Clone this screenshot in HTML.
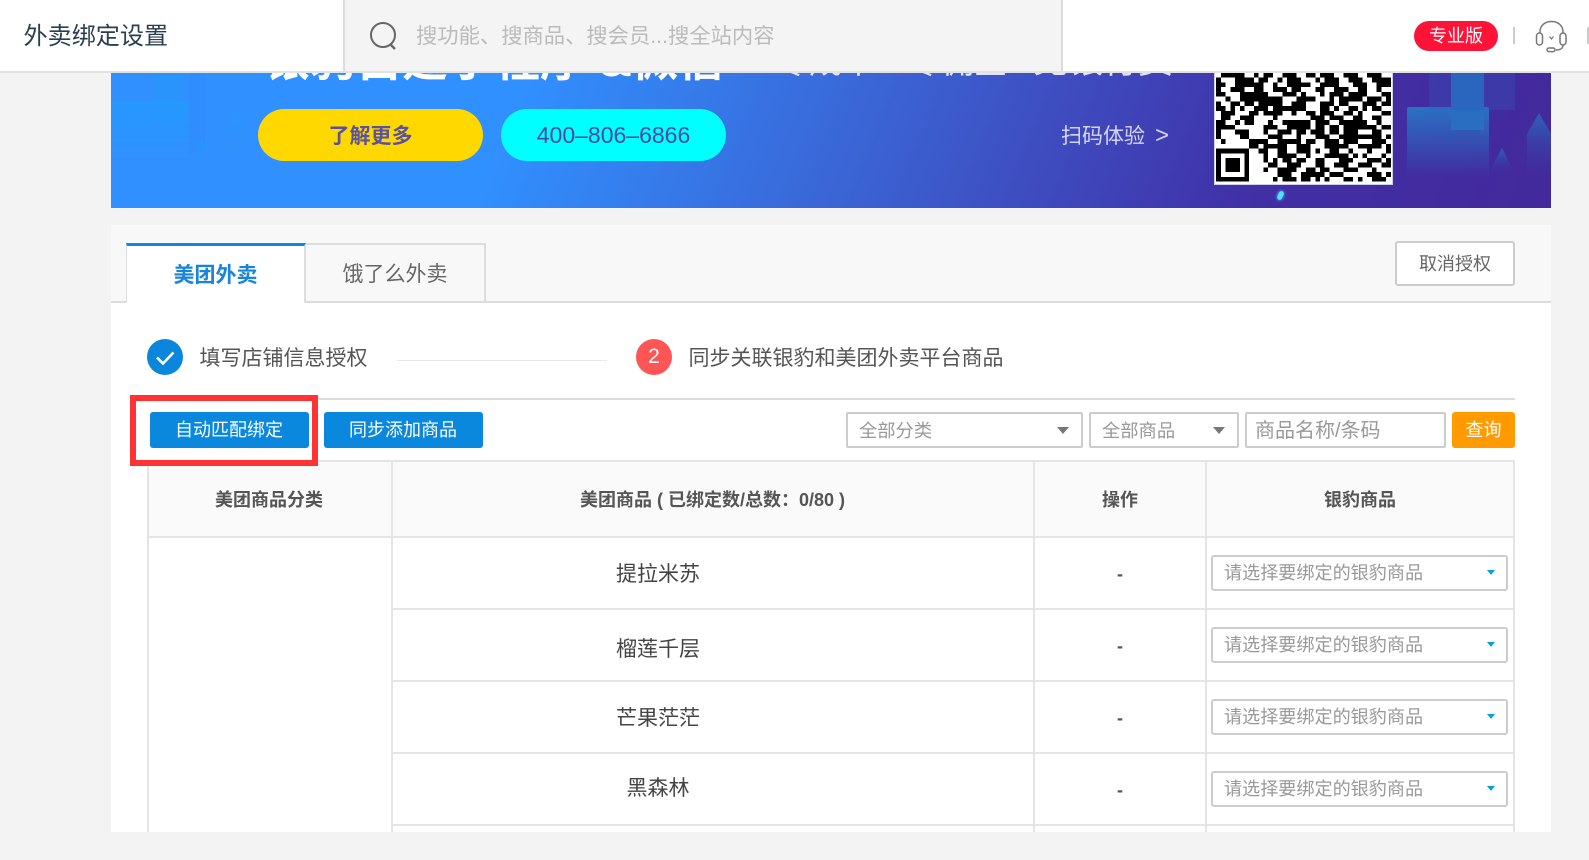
<!DOCTYPE html>
<html lang="zh-CN"><head><meta charset="utf-8"><title>外卖绑定设置</title>
<style>
*{box-sizing:border-box}
html,body{margin:0;padding:0;width:1589px;height:860px;overflow:hidden;background:#f3f3f3;font-family:"Liberation Sans","Noto Sans CJK SC",sans-serif;color:#555}
.a{position:absolute}
.t{position:absolute;white-space:nowrap;line-height:30px;height:30px}
.c{text-align:center}
.hl{position:absolute;background:#e5e5e5;height:2px}
.vl{position:absolute;background:#e5e5e5;width:2px}
.sel{position:absolute;left:1211px;width:297px;height:36px;background:#fff;border:2px solid #ccc;border-radius:3px}
.sel span{position:absolute;left:11px;top:2px;line-height:28px;font-size:18.1px;color:#999;white-space:nowrap}
.sel i{position:absolute;left:274px;top:13px;width:0;height:0;border-left:4.5px solid transparent;border-right:4.5px solid transparent;border-top:5px solid #0a9fdc}
.box{position:absolute;top:412px;height:36px;background:#fff;border:2px solid #ccc;border-radius:2px}
.tri{position:absolute;top:427px;width:0;height:0;border-left:6px solid transparent;border-right:6px solid transparent;border-top:7px solid #777}
.btn{position:absolute;top:412px;height:36px;background:#0a88dd;color:#fff;border-radius:3px;font-size:18px;line-height:36px;text-align:center}
.name{font-size:21px;color:#444;left:392px;width:532px;text-align:center}
.dash{font-size:18px;font-weight:700;left:1035px;width:170px;text-align:center;color:#555}
</style></head><body>

<!-- banner -->
<div class="a" style="left:111px;top:60px;width:1440px;height:148px;overflow:hidden;background:linear-gradient(112deg,#3190ff 0%,#3190ff 28%,#3c5fd0 55%,#412fa6 80%,#43299b 100%)">
  <div class="a" style="left:42px;top:0;width:30px;height:60px;background:#2597fb;opacity:.55"></div>
  <div class="a" style="left:0;top:42px;width:78px;height:60px;background:linear-gradient(rgba(36,153,253,.85),rgba(36,153,253,0))"></div>
  <div class="a" style="left:78px;top:13px;width:16px;height:80px;background:rgba(40,125,240,.15)"></div>
  <svg class="a" style="left:70px;top:40px" width="70" height="80"><defs><linearGradient id="g1" x1="0" y1="0" x2="0" y2="1"><stop offset="0" stop-color="#2499fd"/><stop offset="1" stop-color="#2f8ffc" stop-opacity="0"/></linearGradient></defs><path d="M21 40L34 62H8z" fill="url(#g1)"/><path d="M54 8L66 30V62H44V30z" fill="url(#g1)" opacity=".7"/></svg>
  <div class="a" style="left:1296px;top:47px;width:82px;height:70px;border-radius:2px;background:linear-gradient(#2a72c4,rgba(42,100,190,0))"></div>
  <div class="a" style="left:1340px;top:0;width:33px;height:70px;background:linear-gradient(#2668bf,#2a6fc0)"></div>
  <div class="a" style="left:1318px;top:0;width:86px;height:50px;background:rgba(50,90,190,.3)"></div>
  <svg class="a" style="left:1370px;top:50px" width="70" height="90"><defs><linearGradient id="g2" x1="0" y1="0" x2="0" y2="1"><stop offset="0" stop-color="#2c63b8"/><stop offset="1" stop-color="#3d35a2" stop-opacity="0"/></linearGradient></defs><path d="M21 38L34 64H7z" fill="url(#g2)"/><path d="M58 3L70 24V70H46V24z" fill="url(#g2)"/></svg>
  <div class="t" style="left:153px;top:-30px;font-size:46px;line-height:60px;height:60px;font-weight:700;color:#fff">银豹自建小程序 &amp;微信</div>
  <div class="t" style="left:665px;top:-23px;font-size:33px;line-height:50px;height:50px;color:#dfe6ff">零成本</div>
  <div class="t" style="left:797px;top:-23px;font-size:33px;line-height:50px;height:50px;color:#dfe6ff">零佣金</div>
  <div class="t" style="left:922px;top:-23px;font-size:35px;line-height:50px;height:50px;color:#dfe6ff">免银行费</div>
  <div class="a" style="left:147px;top:49px;width:225px;height:52px;border-radius:26px;background:#ffd800"></div>
  <div class="a" style="left:390px;top:49px;width:225px;height:52px;border-radius:26px;background:#00ffff"></div>
  <div class="t c" style="left:147px;width:225px;top:62px;font-size:21px;font-weight:700;color:#5a52a0">了解更多</div>
  <div class="t c" style="left:390px;width:225px;top:60px;font-size:23px;color:#4a4aa5">400–806–6866</div>
  <div class="t" style="left:950px;top:62px;font-size:21px;color:rgba(255,255,255,.78)">扫码体验</div>
  <div class="t" style="left:1044px;top:61px;font-size:24px;color:rgba(255,255,255,.78)">&gt;</div>
  <div class="a" style="left:1103px;top:0;width:179px;height:125px;background:#fff;border:1px solid #cfcfe8"></div>
  <svg class="a" style="left:1105px;top:13px" width="175" height="110" viewBox="0 0 37 23.3" shape-rendering="crispEdges"><path fill="none" stroke="#000" stroke-width="1" d="M1 .5h5m2 0h1m1 0h2m2 0h3m2 0h2m1 0h3m2 0h3m2 0h3
M0 1.5h1m3 0h4m1 0h2m2 0h1m1 0h3m3 0h1m1 0h3m2 0h3m2 0h4
M0 2.5h2m2 0h6m2 0h1m2 0h5m2 0h4m3 0h3m2 0h3
M0 3.5h1m2 0h3m2 0h2m2 0h3m1 0h2m3 0h2m2 0h3m2 0h2m2 0h1
M0 4.5h2m3 0h6m3 0h3m1 0h1m3 0h1m1 0h3m1 0h4m3 0h2
M2 5.5h1m2 0h9m3 0h4m3 0h1m1 0h5m1 0h3m1 0h2
M0 6.5h1m2 0h2m1 0h2m1 0h5m2 0h3m3 0h3m1 0h2m3 0h3m1 0h2
M0 7.5h2m1 0h1m1 0h1m2 0h3m1 0h7m3 0h2m1 0h1m2 0h2m1 0h1m1 0h2
M1 8.5h3m3 0h2m1 0h4m2 0h1m2 0h2m1 0h3m2 0h2m1 0h1m4 0h3
M1 9.5h2m2 0h3m4 0h1m7 0h3m1 0h3m2 0h2m2 0h2
M0 10.5h2m2 0h1m1 0h2m3 0h1m2 0h6m1 0h3m2 0h6m2 0h1
M0 11.5h4m6 0h3m2 0h5m1 0h2m1 0h2m1 0h7m1 0h2
M0 12.5h1m3 0h3m3 0h1m2 0h3m1 0h2m1 0h3m1 0h2m1 0h3m3 0h2
M0 13.5h1m4 0h2m4 0h3m3 0h1m3 0h3m2 0h9m1 0h2
M1 14.5h1m5 0h4m2 0h5m1 0h2m2 0h3m1 0h3m3 0h3m2 0h2
M7 15.5h2m1 0h5m2 0h3m3 0h5m2 0h5m1 0h2
M0 16.5h7m2 0h2m2 0h2m2 0h3m1 0h1m2 0h2m2 0h1m3 0h1m3 0h2
M0 17.5h1m5 0h1m3 0h1m2 0h4m2 0h1m3 0h5m1 0h1m1 0h1m3 0h1
M0 18.5h1m1 0h3m1 0h1m3 0h1m1 0h1m1 0h2m1 0h2m2 0h2m3 0h3m3 0h3m1 0h1
M0 19.5h1m1 0h3m1 0h1m4 0h2m2 0h3m3 0h2m2 0h3m2 0h3m2 0h2
M0 20.5h1m1 0h3m1 0h1m3 0h1m2 0h4m2 0h2m1 0h2m3 0h3m3 0h1m3 0h1
M0 21.5h1m5 0h1m6 0h3m2 0h5m1 0h3m5 0h3m1 0h2
M0 22.5h7m5 0h1m1 0h3m1 0h2m1 0h1m1 0h1m3 0h2m1 0h1m2 0h3m2 0h2"/></svg>
  <div class="a" style="left:1167px;top:131px;width:5px;height:9px;border-radius:3px;background:#4fe2ff;transform:rotate(25deg);box-shadow:0 0 3px #4fe2ff"></div>
</div>

<!-- header -->
<div class="a" style="left:0;top:0;width:1589px;height:73px;background:#fff;border-bottom:2px solid #e2e2e2"></div>
<div class="a" style="left:343px;top:0;width:720px;height:71px;background:#f4f4f4;border-left:2px solid #dcdcdc;border-right:2px solid #dcdcdc"></div>
<div class="t" style="left:23.500px;top:22px;font-size:24.100px;color:#2a4050">外卖绑定设置</div>
<svg class="a" style="left:368px;top:21px" width="32" height="30" viewBox="0 0 32 30"><circle cx="15" cy="14" r="12" fill="none" stroke="#666" stroke-width="2"/><path d="M22.500 23.500L27 28" stroke="#666" stroke-width="2.400" fill="none"/></svg>
<div class="t" style="left:416px;top:21px;font-size:21.300px;color:#bbb">搜功能、搜商品、搜会员...搜全站内容</div>
<div class="a" style="left:1414px;top:21px;width:84px;height:30px;border-radius:15px;background:#ff1438"></div>
<div class="t c" style="left:1414px;width:84px;top:21px;font-size:18px;color:#fff">专业版</div>
<div class="a" style="left:1513px;top:27px;width:2px;height:17px;background:#ccc"></div>
<div class="a" style="left:1587px;top:27px;width:2px;height:17px;background:#ccc"></div>
<svg class="a" style="left:1535px;top:20px" width="33" height="33" viewBox="0 0 33 33" fill="none" stroke="#777" stroke-width="1.5"><path d="M5 13V12C5 5.500 10 1.500 16.500 1.500S28 5.500 28 12v1"/><rect x="1.500" y="13" width="6" height="12" rx="3"/><rect x="25" y="13" width="6" height="12" rx="3"/><path d="M14.500 16.500l2 2.500 2-2.500" stroke-width="1.200"/><path d="M28 25c0 3-2.500 5-7 5"/><rect x="12" y="28" width="8" height="3.600" rx="1.800"/></svg>

<!-- card -->
<div class="a" style="left:111px;top:225px;width:1440px;height:607px;background:#fff;overflow:hidden"></div>
<div class="a" style="left:111px;top:225px;width:1440px;height:76px;background:#f8f8f8"></div>
<div class="a" style="left:111px;top:301px;width:1440px;height:2px;background:#ddd"></div>
<div class="a" style="left:306px;top:243px;width:180px;height:58px;background:#f8f8f8;border:2px solid #ddd;border-bottom:none;border-left:none"></div>
<div class="a" style="left:126px;top:243px;width:180px;height:60px;background:#fff;border-left:1px solid #ddd;border-right:2px solid #ddd;border-top:3px solid #0a88dd"></div>
<div class="t c" style="left:125.500px;width:180px;top:260.500px;font-size:21px;font-weight:700;color:#1a84dc">美团外卖</div>
<div class="t c" style="left:305px;width:180px;top:260px;font-size:21px;color:#666">饿了么外卖</div>
<div class="a" style="left:1395px;top:241px;width:120px;height:45px;background:#fff;border:2px solid #ccc;border-radius:3px"></div>
<div class="t c" style="left:1395px;width:120px;top:248.500px;font-size:18px;color:#666">取消授权</div>

<!-- steps -->
<div class="a" style="left:147px;top:339px;width:36px;height:36px;border-radius:50%;background:#0a87dd"></div>
<svg class="a" style="left:147px;top:339px" width="36" height="36"><path d="M10 18.500l6 6 10.500-11" fill="none" stroke="#fff" stroke-width="2.600"/></svg>
<div class="t" style="left:199.500px;top:344px;font-size:21px;color:#555">填写店铺信息授权</div>
<div class="a" style="left:397px;top:360px;width:210px;height:1px;background:#e8e8e8"></div>
<div class="a" style="left:636px;top:339px;width:36px;height:36px;border-radius:50%;background:#ff5555"></div>
<div class="t c" style="left:636px;width:36px;top:342px;font-size:21px;color:#fff">2</div>
<div class="t" style="left:688.500px;top:344px;font-size:21px;color:#555">同步关联银豹和美团外卖平台商品</div>

<div class="a" style="left:147px;top:398px;width:1368px;height:2px;background:#ddd"></div>

<!-- toolbar -->
<div class="a" style="left:150px;top:412px;width:159px;height:36px;background:#0a88dd;border-radius:3px"></div>
<div class="a" style="left:324px;top:412px;width:159px;height:36px;background:#0a88dd;border-radius:3px"></div>
<div class="t" style="left:175px;top:415px;font-size:18px;color:#fff">自动匹配绑定</div>
<div class="t" style="left:349px;top:415px;font-size:18px;color:#fff">同步添加商品</div>
<div class="box" style="left:846px;width:237px"></div>
<div class="t" style="left:859px;top:415.500px;font-size:18.300px;color:#999">全部分类</div>
<div class="tri" style="left:1057px"></div>
<div class="box" style="left:1089px;width:150px"></div>
<div class="t" style="left:1102px;top:415.500px;font-size:18.300px;color:#999">全部商品</div>
<div class="tri" style="left:1213px"></div>
<div class="box" style="left:1245px;width:201px"></div>
<div class="t" style="left:1255px;top:415.500px;font-size:20px;color:#999">商品名称/条码</div>
<div class="btn" style="left:1452px;width:63px;background:#ff9a00">查询</div>

<!-- table -->
<div class="a" style="left:148px;top:461px;width:1366px;height:76px;background:#fafafa"></div>
<div class="hl" style="left:147px;top:460px;width:1368px"></div>
<div class="hl" style="left:147px;top:536px;width:1368px"></div>
<div class="hl" style="left:392px;top:608px;width:1122px"></div>
<div class="hl" style="left:392px;top:680px;width:1122px"></div>
<div class="hl" style="left:392px;top:752px;width:1122px"></div>
<div class="hl" style="left:392px;top:824px;width:1122px"></div>
<div class="vl" style="left:147px;top:460px;height:372px"></div>
<div class="vl" style="left:391px;top:460px;height:372px"></div>
<div class="vl" style="left:1033px;top:460px;height:372px"></div>
<div class="vl" style="left:1205px;top:460px;height:372px"></div>
<div class="vl" style="left:1513px;top:460px;height:372px"></div>

<div class="t c" style="left:147.500px;width:243px;top:485px;font-size:18px;font-weight:700">美团商品分类</div>
<div class="t c" style="left:391.500px;width:642px;top:485px;font-size:18px;font-weight:700">美团商品 ( 已绑定数/总数：0/80 )</div>
<div class="t c" style="left:1035px;width:170px;top:485px;font-size:18px;font-weight:700">操作</div>
<div class="t c" style="left:1206.500px;width:307px;top:485px;font-size:18px;font-weight:700">银豹商品</div>

<div class="t name" style="top:559.500px">提拉米苏</div>
<div class="t name" style="top:634.500px">榴莲千层</div>
<div class="t name" style="top:703.500px">芒果茫茫</div>
<div class="t name" style="top:773.500px">黑森林</div>

<div class="t dash" style="top:559px">-</div>
<div class="t dash" style="top:631px">-</div>
<div class="t dash" style="top:703px">-</div>
<div class="t dash" style="top:775px">-</div>

<div class="sel" style="top:555px"><span>请选择要绑定的银豹商品</span><i></i></div>
<div class="sel" style="top:627px"><span>请选择要绑定的银豹商品</span><i></i></div>
<div class="sel" style="top:699px"><span>请选择要绑定的银豹商品</span><i></i></div>
<div class="sel" style="top:771px"><span>请选择要绑定的银豹商品</span><i></i></div>

<!-- red annotation box -->
<div class="a" style="left:130px;top:395px;width:188px;height:71px;border:6px solid #ff3333"></div>

</body></html>
